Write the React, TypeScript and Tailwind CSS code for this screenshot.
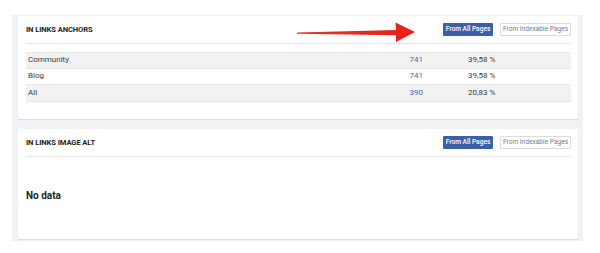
import React from 'react';

interface Row {
  label: string;
  count: number;
  share: string;
}

const anchors: Row[] = [
  { label: 'Community', count: 741, share: '39,58 %' },
  { label: 'Blog', count: 741, share: '39,58 %' },
  { label: 'All', count: 390, share: '20,83 %' },
];

function Toggle() {
  return (
    <div className="flex items-center gap-[7px]">
      <button
        type="button"
        className="h-[13px] w-[50px] rounded-[1px] bg-[#3b60a9] text-[6.6px] font-medium leading-none text-white"
      >
        From All Pages
      </button>
      <button
        type="button"
        className="h-[13px] w-[71px] rounded-[1px] border border-[#dcdcdc] bg-white text-[6.6px] leading-none text-[#7a7a7a]"
      >
        From Indexable Pages
      </button>
    </div>
  );
}

function CardHeader({ title }: { title: string }) {
  return (
    <div className="flex h-[28px] items-center justify-between border-b-[1.5px] border-[#e3e4e6]">
      <h3 className="pt-px text-[7.6px] font-bold tracking-[-0.1px] text-[#222]">{title}</h3>
      <Toggle />
    </div>
  );
}

// red pointer arrow drawn over the first card header
function Arrow() {
  return (
    <svg
      className="pointer-events-none absolute left-[296px] top-[21px]"
      width="122"
      height="23"
      viewBox="0 0 122 23"
    >
      <defs>
        <linearGradient id="arrowRed" x1="0" y1="0" x2="1" y2="0">
          <stop offset="0" stopColor="#e8332a" />
          <stop offset="1" stopColor="#e3211a" />
        </linearGradient>
      </defs>
      <path
        d="M1 11.5 L100 9 L99.5 1.5 L119 11 L100 21 L100 14.2 L1 12.7 Z"
        fill="url(#arrowRed)"
      />
    </svg>
  );
}

export default function App() {
  return (
    <div
      className="relative h-[253px] w-[600px] bg-white pl-[12px] pt-[15px]"
      style={{ fontFamily: 'Roboto, "Liberation Sans", sans-serif' }}
    >
      <div className="flex w-[571px] flex-col gap-[10px] bg-[#f1f2f5] pb-[2px] pl-[6px] pr-[5px] pt-px">
        {/* In links anchors */}
        <section className="h-[103px] bg-white px-[8px] pr-[7px] shadow-[0_1px_1px_rgba(0,0,0,0.08)]">
          <CardHeader title="IN LINKS ANCHORS" />
          <div className="mt-[8px] text-[8px]">
            {anchors.map((row, i) => (
              <div
                key={row.label}
                className={`flex h-[16.5px] items-center border-b border-[#e6e6e6] ${
                  i % 2 === 0 ? 'bg-[#f2f2f2]' : 'bg-white'
                } ${i === 0 ? 'border-t' : ''}`}
              >
                <span className="flex-1 pl-[2px] text-[#3a3a3a]">{row.label}</span>
                <span className="w-[30px] text-right text-[#4267ab]">{row.count}</span>
                <span className="w-[148px] pl-[45px] text-[#3a3a3a]">{row.share}</span>
              </div>
            ))}
          </div>
        </section>

        {/* In links image alt */}
        <section className="h-[110px] bg-white px-[8px] pr-[7px] shadow-[0_1px_1px_rgba(0,0,0,0.08)]">
          <CardHeader title="IN LINKS IMAGE ALT" />
          <p className="mt-[31px] text-[10px] font-bold text-[#222]">No data</p>
        </section>
      </div>
      <Arrow />
    </div>
  );
}
